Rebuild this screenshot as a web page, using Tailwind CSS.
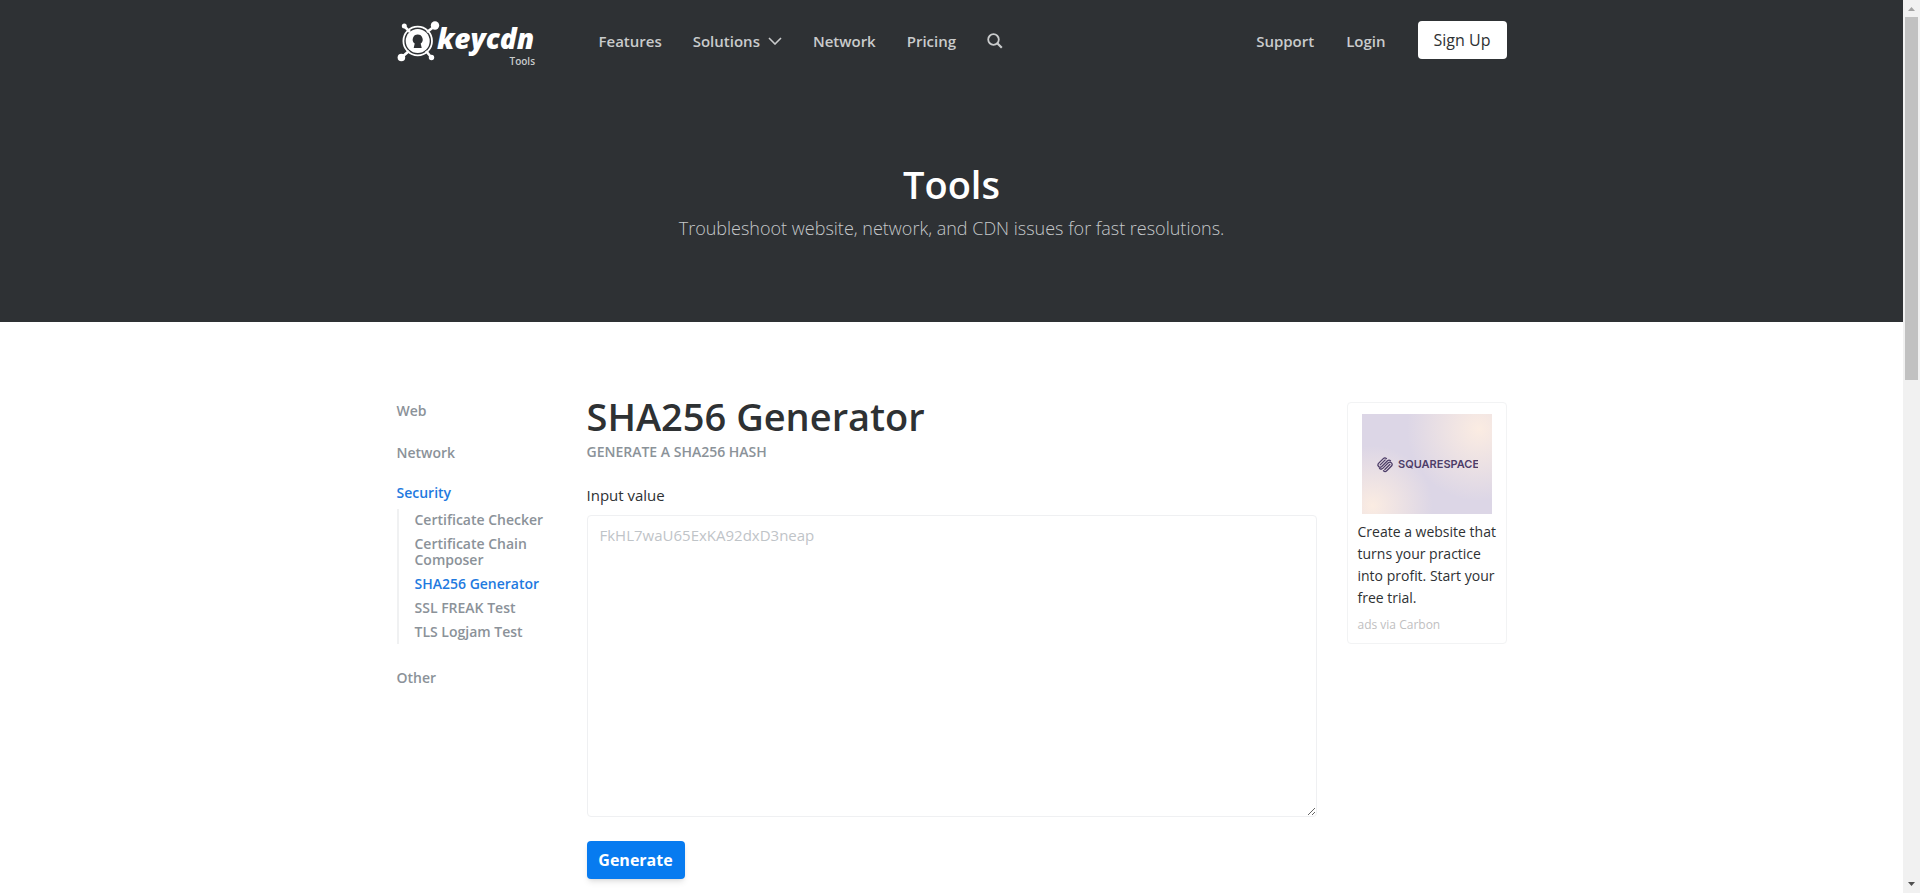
<!DOCTYPE html>
<html lang="en">
<head>
<meta charset="utf-8">
<meta name="viewport" content="width=device-width, initial-scale=1">
<title>SHA256 Generator - KeyCDN Tools</title>
<script src="https://cdn.jsdelivr.net/npm/@tailwindcss/browser@4"></script>
</head>
<body class="flex min-h-screen bg-white font-['Open_Sans','Noto_Sans',sans-serif] text-[#2e3133]">
<div class="min-w-0 flex-1">
  <header class="h-[322px] bg-[#2e3134]">
    <div class="mx-auto max-w-[1140px] px-[15px]">
      <div class="flex h-[82px] items-center text-[15px] font-semibold text-[#c9cbcc]">
        <a href="#" aria-label="KeyCDN Tools" class="mr-16 shrink-0">
          <svg class="overflow-visible" width="138" height="46" viewBox="0 0 138 46" fill="none">
            <g transform="translate(0 2)">
              <path d="M7 6l6 6M38 6l-8 6M5 37l7-6M34 37l-5-6" stroke="#fff" stroke-width="2.600"/>
              <g fill="#fff">
                <circle cx="7.300" cy="6" r="2.500"/><circle cx="38" cy="5.500" r="4.200"/>
                <circle cx="4.400" cy="37.500" r="3.800"/><circle cx="34.500" cy="37.500" r="2.700"/>
              </g>
              <circle cx="20.700" cy="21" r="14.300" stroke="#fff" stroke-width="1.800"/>
              <circle cx="20.700" cy="21" r="12" fill="#fff"/>
              <path d="M20.700 14.500a5 5 0 0 0-3 9l-1 4.500h8l-1-4.500a5 5 0 0 0-3-9z" fill="#2e3134"/>
            </g>
            <text x="40" y="31" fill="#fff" font-family="Open Sans, sans-serif" font-size="28" font-weight="800" font-style="italic">keycdn</text>
            <text x="138" y="47" text-anchor="end" fill="#c9cbcc" font-family="Open Sans, sans-serif" font-size="10" font-weight="600">Tools</text>
          </svg>
        </a>
        <nav class="flex flex-1 items-center gap-[31px]">
          <a href="#">Features</a>
          <a href="#" class="flex items-center gap-2">Solutions
            <svg width="14" height="8" viewBox="0 0 14 8" fill="none" stroke="#c9cbcc" stroke-width="1.600"><path d="M1 1l6 6 6-6"/></svg>
          </a>
          <a href="#">Network</a>
          <a href="#">Pricing</a>
          <button type="button" aria-label="Search">
            <svg width="16" height="16" viewBox="0 0 16 16" fill="none" stroke="#c9cbcc" stroke-width="1.800"><circle cx="6.500" cy="6.500" r="5.300"/><path d="M10.300 10.300l4.500 4.500" stroke-width="2.200"/></svg>
          </button>
        </nav>
        <div class="flex items-center gap-8">
          <a href="#">Support</a>
          <a href="#">Login</a>
          <a href="#" class="mb-0.5 flex h-[38px] w-[89px] items-center justify-center rounded bg-white text-base font-normal text-[#2e3133]">Sign Up</a>
        </div>
      </div>
      <div class="pt-[72px] text-center">
        <div class="text-[38px] leading-[60px] font-semibold text-white">Tools</div>
        <p class="text-[18px] leading-7 font-light text-[#c5c8ca]">Troubleshoot website, network, and CDN issues for fast resolutions.</p>
      </div>
    </div>
  </header>

  <main class="mx-auto flex max-w-[1140px] px-[15px] pt-20">
    <nav class="w-[190px] shrink-0 pr-8 text-[14px] leading-4 font-semibold text-[#8b9299]">
      <a href="#" class="mt-px block">Web</a>
      <a href="#" class="mt-[26px] block">Network</a>
      <a href="#" class="mt-6 block text-[#1f7ae0]">Security</a>
      <ul class="mt-2 -mr-4 flex flex-col gap-2 border-l-2 border-[#f0f1f2] pt-[3px] pb-1 pl-4">
        <li><a href="#">Certificate Checker</a></li>
        <li><a href="#">Certificate Chain<br>Composer</a></li>
        <li><a href="#" class="text-[#1f7ae0]">SHA256 Generator</a></li>
        <li><a href="#">SSL FREAK Test</a></li>
        <li><a href="#">TLS Logjam Test</a></li>
      </ul>
      <a href="#" class="mt-[26px] block">Other</a>
    </nav>

    <form class="min-w-0 flex-1" onsubmit="return false">
      <h1 class="-mt-[14px] text-[38px] leading-[56px] font-semibold">SHA256 Generator</h1>
      <p class="text-[14px] leading-4 font-semibold text-[#8b9299]">GENERATE A SHA256 HASH</p>
      <label for="value" class="mt-6 block text-[15px] leading-[23px]">Input value</label>
      <textarea id="value" placeholder="FkHL7waU65ExKA92dxD3neap" class="mt-2 block h-[302px] w-full resize rounded border border-[#eff0f2] px-3 py-[7px] text-[15px] leading-6 outline-none placeholder:text-[#bfc4c8]"></textarea>
      <button type="submit" class="mt-6 h-[38px] w-[98px] rounded bg-[#077bf0] text-[16px] font-bold text-white shadow-md">Generate</button>
    </form>

    <aside class="ml-[30px] w-40 shrink-0">
      <div class="rounded border border-[#f2f3f4] px-[10px] pt-[11px] pb-[10px]">
        <a href="#" aria-label="Squarespace" class="mx-auto flex h-[100px] w-[130px] items-center justify-center bg-[#dcd6e6] bg-[radial-gradient(circle_at_90%_15%,#fbece2_0%,transparent_50%),radial-gradient(circle_at_8%_92%,#fbece2_0%,transparent_40%)]">
          <svg width="102" height="18" viewBox="0 0 102 18" fill="none">
            <g stroke="#4d3d68" stroke-width="1.300" stroke-linecap="round">
              <path d="M10.500 3.600a2.300 2.300 0 0 0-3.200 0L2.300 8.600a2.300 2.300 0 0 0 3.200 3.200L11.500 5.800q1.500-1.300 3 0"/>
              <path d="M7.500 15.800a2.300 2.300 0 0 0 3.200 0l5-5a2.300 2.300 0 0 0-3.200-3.200l-6 6q-1.500 1.300-3 0"/>
              <path d="M4.200 9.900l5-5M13.800 9.500l-5 5"/>
            </g>
            <text x="22" y="13" fill="#4d3d68" font-family="Inter, sans-serif" font-size="11" font-weight="600">SQUARESPACE</text>
          </svg>
        </a>
        <a href="#" class="mt-[7px] block text-[14px] leading-[22px] whitespace-nowrap">Create a website that<br>turns your practice<br>into profit. Start your<br>free trial.</a>
        <a href="#" class="mt-2 block text-[12px] leading-4 text-[#bfc0c1]">ads via Carbon</a>
      </div>
    </aside>
  </main>
</div>

<div class="flex w-[17px] shrink-0 flex-col items-center bg-[#f1f1f1]" aria-hidden="true">
  <svg width="17" height="17" viewBox="0 0 17 17"><path d="M5 11h7L8.500 7z" fill="#a3a3a3"/></svg>
  <div class="h-[363px] w-[13px] bg-[#c1c1c1]"></div>
  <svg class="mt-auto" width="17" height="17" viewBox="0 0 17 17"><path d="M5 6h7l-3.500 4z" fill="#505050"/></svg>
</div>
</body>
</html>
